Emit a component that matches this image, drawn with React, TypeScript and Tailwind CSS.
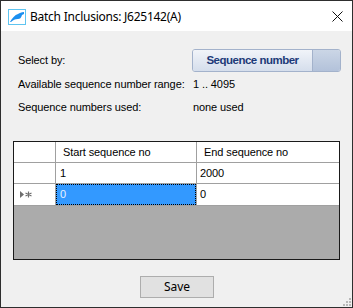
import React from "react";

const ui = { fontFamily: '"Liberation Sans", Arial, sans-serif' };
const title = { fontFamily: '"Noto Sans", "Open Sans", sans-serif' };

const AppIcon = () => (
  <svg width="18" height="16" viewBox="0 0 18 16">
    <rect x="0.5" y="0.5" width="17" height="15" fill="#fff" stroke="#5ec4f0" />
    <path d="M2 13 C4 9 7 6 10 5 C12 4 13 3 16 3 L16 5 L14 6 C13 9 12 10 10 10 C7 10 5 11 3 13 Z" fill="#1a8ff0" />
  </svg>
);

const CloseIcon = () => (
  <svg width="11" height="11" viewBox="0 0 11 11">
    <path d="M0.5 0.5 L10.5 10.5 M10.5 0.5 L0.5 10.5" stroke="#111" strokeWidth="1" />
  </svg>
);

const NewRowGlyph = () => (
  <svg width="12" height="7" viewBox="0 0 12 7">
    <path d="M0 0 L4 3.5 L0 7 Z" fill="#6e6e6e" />
    <path d="M8.5 0.5 V6.5 M5.5 2 L11.5 5 M11.5 2 L5.5 5" stroke="#6e6e6e" strokeWidth="1.2" />
  </svg>
);

const App = () => {
  return (
    <div className="w-[353px] h-[308px] border border-[#2e2e2e] flex flex-col bg-white text-[11px] text-black" style={ui}>
      {/* title bar */}
      <div className="h-[30px] flex items-center bg-white">
        <div className="ml-[7px] mt-[1px]">
          <AppIcon />
        </div>
        <span className="ml-[4px] text-[12px] mt-[1px] tracking-[-0.25px]" style={title}>
          Batch Inclusions: J625142(A)
        </span>
        <div className="ml-auto mr-[9px] mt-[1px]">
          <CloseIcon />
        </div>
      </div>

      {/* body */}
      <div className="flex-1 bg-[#f0f0f0] flex flex-col relative tracking-[-0.1px]">
        <div className="pt-[18px] pl-[17px] flex flex-col">
          <div className="flex items-center h-[23px]">
            <span className="w-[174px]">Select by:</span>
            <div className="w-[149px] h-[23px] flex rounded-[3px] border border-[#a3b2cb] overflow-hidden">
              <div className="w-[120px] flex items-center justify-center font-bold text-[11.5px] tracking-[-0.5px] text-[#1d3a78] bg-gradient-to-b from-[#f1f4f9] to-[#d5deec] border-r border-[#a3b2cb]">
                Sequence number
              </div>
              <div className="flex-1 bg-gradient-to-b from-[#cbd6e6] to-[#b3c2da]" />
            </div>
          </div>
          <div className="flex items-center h-[16px] mt-[4px]">
            <span className="w-[175px]">Available sequence number range:</span>
            <span>1 .. 4095</span>
          </div>
          <div className="flex items-center h-[16px] mt-[7px]">
            <span className="w-[175px]">Sequence numbers used:</span>
            <span>none used</span>
          </div>
        </div>

        {/* grid */}
        <div className="ml-[12px] mt-[26px] w-[327px] h-[119px] border border-[#1a1a1a] bg-[#ababab] flex flex-col">
          <div className="flex h-[21px] bg-white border-b border-[#a0a0a0]">
            <div className="w-[42px] border-r border-[#a0a0a0]" />
            <div className="w-[141px] border-r border-[#a0a0a0] flex items-center pl-[7px]">Start sequence no</div>
            <div className="flex-1 flex items-center pl-[7px]">End sequence no</div>
          </div>
          <div className="flex h-[21px] bg-white border-b border-[#a0a0a0]">
            <div className="w-[42px] border-r border-[#a0a0a0]" />
            <div className="w-[141px] border-r border-[#a0a0a0] flex items-center pl-[4px]">1</div>
            <div className="flex-1 flex items-center pl-[3px]">2000</div>
          </div>
          <div className="flex h-[22px] bg-white border-b border-[#a0a0a0]">
            <div className="w-[42px] border-r border-[#a0a0a0] flex items-center pl-[6px]">
              <NewRowGlyph />
            </div>
            <div className="w-[141px] border-r border-[#a0a0a0] bg-[#3399ff] flex items-center">
              <div className="w-full h-full border border-dotted border-black flex items-center pl-[3px] text-[#e8f2ff]">0</div>
            </div>
            <div className="flex-1 flex items-center pl-[3px]">0</div>
          </div>
        </div>

        <div className="flex justify-center mt-[16px] pl-[1px]">
          <button className="w-[74px] h-[22px] bg-[#e1e1e1] border border-[#adadad] text-[12px] flex items-center justify-center" style={title}>
            Save
          </button>
        </div>

        {/* resize grip */}
        <div className="absolute right-[1px] bottom-[1px] grid grid-cols-3 gap-[1px]">
          <span className="w-[2px] h-[2px]" />
          <span className="w-[2px] h-[2px]" />
          <span className="w-[2px] h-[2px] bg-[#b8b8b8]" />
          <span className="w-[2px] h-[2px]" />
          <span className="w-[2px] h-[2px] bg-[#b8b8b8]" />
          <span className="w-[2px] h-[2px] bg-[#b8b8b8]" />
          <span className="w-[2px] h-[2px] bg-[#b8b8b8]" />
          <span className="w-[2px] h-[2px] bg-[#b8b8b8]" />
          <span className="w-[2px] h-[2px] bg-[#b8b8b8]" />
        </div>
      </div>
    </div>
  );
};

export default App;
